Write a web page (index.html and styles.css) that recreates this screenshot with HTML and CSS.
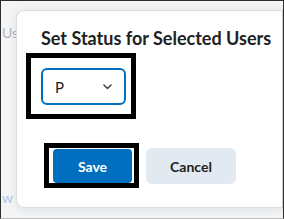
FILE: index.html
```html
<!DOCTYPE html>
<html lang="en">
<head>
    <meta charset="UTF-8">
    <meta name="viewport" content="width=device-width, initial-scale=1.0">
    <title>Set Status</title>
    <link rel="stylesheet" href="styles.css">
</head>
<body>
    <div class="frame">
        <!-- page behind the dialog -->
        <div class="side">
            <span class="side-top">Users</span>
            <span class="side-bottom">w</span>
        </div>

        <div class="dialog">
            <h1 class="dialog-title">Set Status for Selected Users</h1>

            <div class="mark mark-select">
                <div class="select">
                    <span>P</span>
                    <svg class="chevron" width="9" height="6" viewBox="0 0 9 6">
                        <path d="M1 1l3.5 3.5L8 1" fill="none" stroke="#494c4e" stroke-width="1.6" stroke-linecap="round" stroke-linejoin="round"/>
                    </svg>
                </div>
            </div>

            <div class="actions">
                <div class="mark mark-save">
                    <button class="btn btn-primary">Save</button>
                </div>
                <button class="btn btn-cancel">Cancel</button>
            </div>
        </div>
    </div>
</body>
</html>
```

FILE: styles.css
```css
body {
    margin: 0;
    font-family: Lato, "Open Sans", sans-serif;
}

.frame {
    width: 284px;
    height: 219px;
    box-sizing: border-box;
    border: 1px solid #2e2e2e;
    border-bottom-color: #bdbdbd;
    background: #f3f4f6;
    display: flex;
    overflow: hidden;
}

/* Faded page content on the left */
.side {
    width: 14px;
    flex-shrink: 0;
    display: flex;
    flex-direction: column;
    justify-content: space-between;
    padding: 23px 0 12px 1px;
    overflow: hidden;
    white-space: nowrap;
    font-size: 14px;
}
.side-top {
    color: #b3b5b8;
}
.side-bottom {
    color: #a9c6e3;
}

/* Dialog */
.dialog {
    flex: 1;
    margin: 9px 0 10px 0;
    background: #fff;
    border: 1px solid #dcdde0;
    border-right-color: #c9cacd;
    border-radius: 8px 0 0 8px;
    box-shadow: 0 2px 10px rgba(0, 0, 0, 0.08);
    padding: 16px 0 0 9px;
}

.dialog-title {
    margin: 0 0 4px 15px;
    font-size: 18px;
    line-height: 22px;
    font-weight: 700;
    color: #202122;
    white-space: nowrap;
}

/* Black highlight boxes */
.mark {
    display: inline-flex;
    border: 5px solid #000;
}
.mark-select {
    padding: 10px 5px 9px 10px;
}
.mark-save {
    padding: 1px 2px 0 4px;
    margin-left: 18px;
}

.select {
    width: 85px;
    height: 37px;
    box-sizing: border-box;
    border: 2px solid #006fbf;
    border-radius: 6px;
    display: flex;
    align-items: center;
    justify-content: space-between;
    padding: 0 12px 0 12px;
    font-size: 15px;
    color: #202122;
}

.actions {
    display: flex;
    align-items: flex-start;
    gap: 7px;
    margin-top: 24px;
}

.btn {
    font-family: Lato, "Open Sans", sans-serif;
    font-size: 14px;
    font-weight: 700;
    border: none;
    cursor: pointer;
}
.btn-primary {
    width: 79px;
    height: 34px;
    border-radius: 4px;
    background: #006fbf;
    color: #fff;
}
.btn-cancel {
    width: 90px;
    height: 36px;
    margin-top: 5px;
    border-radius: 6px;
    background: #e3e9f1;
    color: #202122;
}
```
